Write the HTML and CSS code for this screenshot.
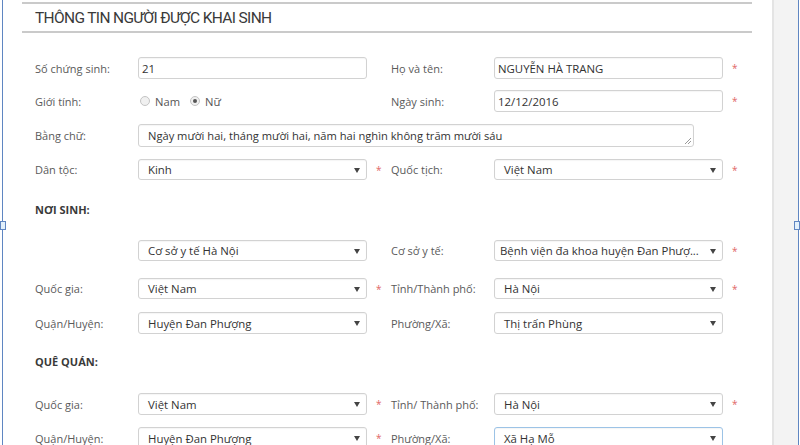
FILE: index.html
```html
<!DOCTYPE html>
<html lang="vi">
<head>
<meta charset="utf-8">
<title>Thông tin người được khai sinh</title>
<link rel="stylesheet" href="styles.css">
</head>
<body>
<div class="frame">
  <span class="handle handle-l"></span>
  <span class="handle handle-r"></span>
  <main class="content">
    <header class="title-bar"><h1>THÔNG TIN NGƯỜI ĐƯỢC KHAI SINH</h1></header>
    <div class="form">
      <div class="row row-1">
        <span class="lbl">Số chứng sinh:</span>
        <div class="input">21</div>
        <span class="req"></span>
        <span class="lbl">Họ và tên:</span>
        <div class="input">NGUYỄN HÀ TRANG</div>
        <span class="req">*</span>
      </div>
      <div class="row row-2">
        <span class="lbl">Giới tính:</span>
        <div class="radios">
          <span class="radio"></span><span class="radio-text">Nam</span>
          <span class="radio checked"></span><span class="radio-text">Nữ</span>
        </div>
        <span class="req"></span>
        <span class="lbl">Ngày sinh:</span>
        <div class="input">12/12/2016</div>
        <span class="req">*</span>
      </div>
      <div class="row row-3">
        <span class="lbl">Bằng chữ:</span>
        <div class="textarea">Ngày mười hai, tháng mười hai, năm hai nghìn không trăm mười sáu<span class="grip"></span></div>
      </div>
      <div class="row row-4">
        <span class="lbl">Dân tộc:</span>
        <div class="select">Kinh<span class="caret"></span></div>
        <span class="req">*</span>
        <span class="lbl">Quốc tịch:</span>
        <div class="select">Việt Nam<span class="caret"></span></div>
        <span class="req">*</span>
      </div>

      <h2 class="section section-1">NƠI SINH:</h2>
      <div class="row row-5">
        <span class="lbl"></span>
        <div class="select">Cơ sở y tế Hà Nội<span class="caret"></span></div>
        <span class="req"></span>
        <span class="lbl">Cơ sở y tế:</span>
        <div class="select tight">Bệnh viện đa khoa huyện Đan Phượ...<span class="caret"></span></div>
        <span class="req">*</span>
      </div>
      <div class="row row-6">
        <span class="lbl">Quốc gia:</span>
        <div class="select">Việt Nam<span class="caret"></span></div>
        <span class="req">*</span>
        <span class="lbl">Tỉnh/Thành phố:</span>
        <div class="select">Hà Nội<span class="caret"></span></div>
        <span class="req">*</span>
      </div>
      <div class="row row-7">
        <span class="lbl">Quận/Huyện:</span>
        <div class="select">Huyện Đan Phượng<span class="caret"></span></div>
        <span class="req"></span>
        <span class="lbl">Phường/Xã:</span>
        <div class="select">Thị trấn Phùng<span class="caret"></span></div>
        <span class="req"></span>
      </div>

      <h2 class="section section-2">QUÊ QUÁN:</h2>
      <div class="row row-8">
        <span class="lbl">Quốc gia:</span>
        <div class="select">Việt Nam<span class="caret"></span></div>
        <span class="req">*</span>
        <span class="lbl">Tỉnh/ Thành phố:</span>
        <div class="select">Hà Nội<span class="caret"></span></div>
        <span class="req">*</span>
      </div>
      <div class="row row-9">
        <span class="lbl">Quận/Huyện:</span>
        <div class="select">Huyện Đan Phượng<span class="caret"></span></div>
        <span class="req">*</span>
        <span class="lbl">Phường/Xã:</span>
        <div class="select focus">Xã Hạ Mỗ<span class="caret"></span></div>
        <span class="req"></span>
      </div>
    </div>
  </main>
  <aside class="side"></aside>
</div>
</body>
</html>
```
FILE: styles.css
```css
* { box-sizing: border-box; }
html, body { margin: 0; padding: 0; background: #ffffff; }
body {
  font-family: "Open Sans", "Noto Sans", sans-serif;
  color: #555;
  width: 800px;
  height: 445px;
  overflow: hidden;
}

.frame {
  position: relative;
  margin-left: 2px;
  width: 797px;
  height: 445px;
  display: flex;
  border-left: 1px solid #5f86c2;
  border-right: 1px solid #5f86c2;
}

.handle {
  position: absolute;
  width: 6px;
  height: 9px;
  top: 221px;
  background: #e2f0fb;
  border: 1px solid #5f86c2;
}
.handle-l { left: -3px; }
.handle-r { right: -2px; }

.content {
  flex: 1;
  padding-left: 19px;
  background: #fff;
}

.side {
  width: 26px;
  background: #f3f3f3;
  border-left: 2px solid #e4e4e4;
}

.title-bar {
  width: 730px;
  margin-top: 2px;
  height: 31px;
  border-top: 2px solid #cacaca;
  border-bottom: 2px solid #cacaca;
  display: flex;
  align-items: center;
  padding-left: 13px;
}
.title-bar h1 {
  margin: 0;
  font-family: Roboto, "Liberation Sans", sans-serif;
  font-weight: 400;
  font-size: 15.5px;
  letter-spacing: -0.65px;
  color: #3a3a3a;
}

.form {
  padding-left: 13px;
}

.row {
  display: grid;
  grid-template-columns: 103px 229px 24px 103px 229px 24px;
  align-items: center;
  height: 22px;
}
.row-1 { margin-top: 24px; }
.row-2 { margin-top: 11px; }
.row-3 { margin-top: 12px; height: 23px; }
.row-4 { margin-top: 12px; height: 21px; }
.row-5 { margin-top: 0; height: 21px; }
.row-6 { margin-top: 17px; height: 21px; }
.row-7 { margin-top: 13px; }
.row-8 { margin-top: 0; }
.row-9 { margin-top: 12px; }

.lbl {
  font-size: 11px;
  color: #5a5a5a;
  white-space: nowrap;
}

.input, .select, .textarea {
  height: 100%;
  border: 1px solid #d2d2d2;
  border-radius: 3px;
  font-size: 11.4px;
  color: #333;
  display: flex;
  align-items: center;
  white-space: nowrap;
  background: #fff;
  box-shadow: inset 0 1px 1px rgba(0,0,0,0.04);
}
.input { padding-left: 3px; }
.select { padding-left: 9px; position: relative; }
.select.tight { padding-left: 5px; }
.select.focus { border-color: #9cc3e6; }

.caret {
  position: absolute;
  right: 6px;
  top: 50%;
  margin-top: -2px;
  width: 0;
  height: 0;
  border-left: 3.5px solid transparent;
  border-right: 3.5px solid transparent;
  border-top: 5px solid #444;
}

.textarea {
  grid-column: 2 / 6;
  width: 556px;
  padding-left: 9px;
  font-size: 11.15px;
  position: relative;
}
.grip {
  position: absolute;
  right: 2px;
  bottom: 2px;
  width: 6px;
  height: 6px;
  background: linear-gradient(135deg, transparent 45%, #999 45%, #999 55%, transparent 55%, transparent 70%, #999 70%, #999 80%, transparent 80%);
}

.req {
  padding-left: 9px;
  color: #e06666;
  font-size: 10px;
  line-height: 1;
}

.radios {
  display: flex;
  align-items: center;
  padding-left: 2px;
  font-size: 11.2px;
  color: #555;
}
.radio {
  width: 10px;
  height: 10px;
  border-radius: 50%;
  border: 1px solid #c4c4c4;
  background: #f0f0f0;
  position: relative;
}
.radio.checked::after {
  content: "";
  position: absolute;
  left: 2px;
  top: 2px;
  width: 4px;
  height: 4px;
  border-radius: 50%;
  background: #555;
}
.radio-text { margin-left: 5px; margin-right: 10px; }

.section {
  margin: 0;
  font-size: 11px;
  font-weight: 700;
  color: #3a3a3a;
  height: 15px;
  line-height: 15px;
}
.section-1 { margin-top: 22px; margin-bottom: 23px; }
.section-2 { margin-top: 20px; margin-bottom: 24px; }
```
